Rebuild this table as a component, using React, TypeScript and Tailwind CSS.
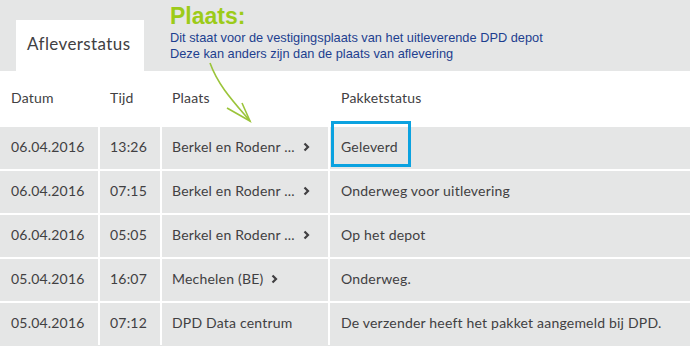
const rows = [
  { datum: "06.04.2016", tijd: "13:26", plaats: "Berkel en Rodenr ...", link: true, status: "Geleverd", highlight: true },
  { datum: "06.04.2016", tijd: "07:15", plaats: "Berkel en Rodenr ...", link: true, status: "Onderweg voor uitlevering" },
  { datum: "06.04.2016", tijd: "05:05", plaats: "Berkel en Rodenr ...", link: true, status: "Op het depot" },
  { datum: "05.04.2016", tijd: "16:07", plaats: "Mechelen (BE)", link: true, status: "Onderweg." },
  { datum: "05.04.2016", tijd: "07:12", plaats: "DPD Data centrum", link: false, status: "De verzender heeft het pakket aangemeld bij DPD." },
]

function Chevron() {
  return (
    <svg width="7" height="10" viewBox="0 0 7 10" className="ml-[8px] shrink-0">
      <path d="M1.5 1.5 L5 5 L1.5 8.5" fill="none" stroke="#414042" strokeWidth="2.2" />
    </svg>
  )
}

export default function App() {
  return (
    <div className="relative w-[690px] h-[346px] overflow-hidden bg-[#e5e6e6] font-['Lato',sans-serif] text-[14px] tracking-[0.2px] text-[#414042]">
      {/* Top bar with tab + annotation */}
      <div className="flex h-[71px]">
        <div className="ml-4 mt-5 flex h-[51px] w-[128px] items-center bg-white pb-[3px] pl-[11px] text-[17px] tracking-[0.4px]">
          Afleverstatus
        </div>
        <div className="ml-[26px] pt-[3px] font-['Liberation_Sans',Arial,sans-serif] tracking-normal">
          <div className="text-[23px] font-bold leading-[26px] text-[#9ccb19]">Plaats:</div>
          <div className="pt-[1px] text-[12.8px] leading-[16px] text-[#1d3f8f]">
            <div>Dit staat voor de vestigingsplaats van het uitleverende DPD depot</div>
            <div>Deze kan anders zijn dan de plaats van aflevering</div>
          </div>
        </div>
      </div>

      {/* Table */}
      <div className="grid grid-cols-[98px_60px_166px_1fr] gap-[2px] bg-white">
        <div className="flex h-[54px] items-center bg-white pb-[2px] pl-[11px]">Datum</div>
        <div className="flex h-[54px] items-center bg-white pb-[2px] pl-[10px]">Tijd</div>
        <div className="flex h-[54px] items-center bg-white pb-[2px] pl-[10px]">Plaats</div>
        <div className="flex h-[54px] items-center bg-white pb-[2px] pl-[11px]">Pakketstatus</div>

        {rows.map((r, i) => (
          <div key={i} className="contents">
            <div className="flex h-[42px] items-center bg-[#e5e6e6] pb-[3px] pl-[11px]">{r.datum}</div>
            <div className="flex h-[42px] items-center bg-[#e5e6e6] pb-[3px] pl-[10px]">{r.tijd}</div>
            <div className="flex h-[42px] items-center bg-[#e5e6e6] pb-[3px] pl-[10px]">
              <span className="whitespace-nowrap">{r.plaats}</span>
              {r.link && <Chevron />}
            </div>
            <div className="relative flex h-[42px] items-center bg-[#e5e6e6] pb-[3px] pl-[11px]">
              {r.status}
              {r.highlight && (
                <div className="absolute left-[1px] top-[-6px] h-[46px] w-[80px] border-[3px] border-[#0ba2e0]" />
              )}
            </div>
          </div>
        ))}
      </div>

      {/* Annotation arrow */}
      <svg className="absolute left-0 top-0" width="690" height="346" viewBox="0 0 690 346" fill="none">
        <path d="M210 63 C 218 85, 232 100, 250 121" stroke="#9bc43a" strokeWidth="1.6" />
        <path d="M227 108 L250 121 L242 103" stroke="#9bc43a" strokeWidth="1.6" />
      </svg>
    </div>
  )
}
